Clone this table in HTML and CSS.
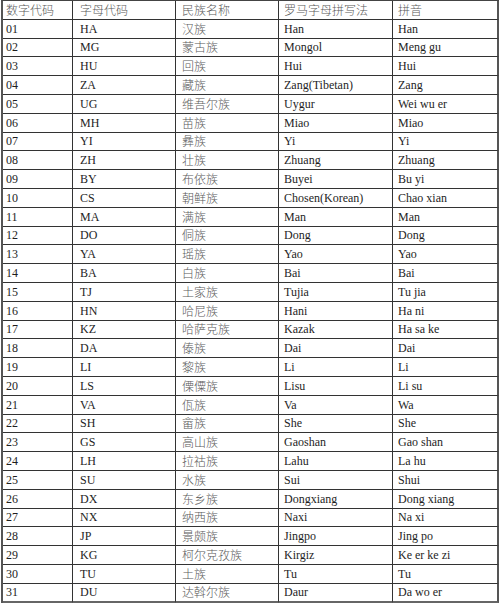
FILE: index.html
```html
<!DOCTYPE html>
<html lang="zh">
<head>
<meta charset="utf-8">
<link rel="stylesheet" href="styles.css">
</head>
<body>
<div class="tbl">
<div class="c h">数字代码</div><div class="c h">字母代码</div><div class="c h">民族名称</div><div class="c h">罗马字母拼写法</div><div class="c h">拼音</div>
<div class="c">01</div><div class="c">HA</div><div class="c zh">汉族</div><div class="c">Han</div><div class="c">Han</div>
<div class="c">02</div><div class="c">MG</div><div class="c zh">蒙古族</div><div class="c">Mongol</div><div class="c">Meng gu</div>
<div class="c">03</div><div class="c">HU</div><div class="c zh">回族</div><div class="c">Hui</div><div class="c">Hui</div>
<div class="c">04</div><div class="c">ZA</div><div class="c zh">藏族</div><div class="c">Zang(Tibetan)</div><div class="c">Zang</div>
<div class="c">05</div><div class="c">UG</div><div class="c zh">维吾尔族</div><div class="c">Uygur</div><div class="c">Wei wu er</div>
<div class="c">06</div><div class="c">MH</div><div class="c zh">苗族</div><div class="c">Miao</div><div class="c">Miao</div>
<div class="c">07</div><div class="c">YI</div><div class="c zh">彝族</div><div class="c">Yi</div><div class="c">Yi</div>
<div class="c">08</div><div class="c">ZH</div><div class="c zh">壮族</div><div class="c">Zhuang</div><div class="c">Zhuang</div>
<div class="c">09</div><div class="c">BY</div><div class="c zh">布依族</div><div class="c">Buyei</div><div class="c">Bu yi</div>
<div class="c">10</div><div class="c">CS</div><div class="c zh">朝鲜族</div><div class="c">Chosen(Korean)</div><div class="c">Chao xian</div>
<div class="c">11</div><div class="c">MA</div><div class="c zh">满族</div><div class="c">Man</div><div class="c">Man</div>
<div class="c">12</div><div class="c">DO</div><div class="c zh">侗族</div><div class="c">Dong</div><div class="c">Dong</div>
<div class="c">13</div><div class="c">YA</div><div class="c zh">瑶族</div><div class="c">Yao</div><div class="c">Yao</div>
<div class="c">14</div><div class="c">BA</div><div class="c zh">白族</div><div class="c">Bai</div><div class="c">Bai</div>
<div class="c">15</div><div class="c">TJ</div><div class="c zh">土家族</div><div class="c">Tujia</div><div class="c">Tu jia</div>
<div class="c">16</div><div class="c">HN</div><div class="c zh">哈尼族</div><div class="c">Hani</div><div class="c">Ha ni</div>
<div class="c">17</div><div class="c">KZ</div><div class="c zh">哈萨克族</div><div class="c">Kazak</div><div class="c">Ha sa ke</div>
<div class="c">18</div><div class="c">DA</div><div class="c zh">傣族</div><div class="c">Dai</div><div class="c">Dai</div>
<div class="c">19</div><div class="c">LI</div><div class="c zh">黎族</div><div class="c">Li</div><div class="c">Li</div>
<div class="c">20</div><div class="c">LS</div><div class="c zh">傈僳族</div><div class="c">Lisu</div><div class="c">Li su</div>
<div class="c">21</div><div class="c">VA</div><div class="c zh">佤族</div><div class="c">Va</div><div class="c">Wa</div>
<div class="c">22</div><div class="c">SH</div><div class="c zh">畲族</div><div class="c">She</div><div class="c">She</div>
<div class="c">23</div><div class="c">GS</div><div class="c zh">高山族</div><div class="c">Gaoshan</div><div class="c">Gao shan</div>
<div class="c">24</div><div class="c">LH</div><div class="c zh">拉祜族</div><div class="c">Lahu</div><div class="c">La hu</div>
<div class="c">25</div><div class="c">SU</div><div class="c zh">水族</div><div class="c">Sui</div><div class="c">Shui</div>
<div class="c">26</div><div class="c">DX</div><div class="c zh">东乡族</div><div class="c">Dongxiang</div><div class="c">Dong xiang</div>
<div class="c">27</div><div class="c">NX</div><div class="c zh">纳西族</div><div class="c">Naxi</div><div class="c">Na xi</div>
<div class="c">28</div><div class="c">JP</div><div class="c zh">景颇族</div><div class="c">Jingpo</div><div class="c">Jing po</div>
<div class="c">29</div><div class="c">KG</div><div class="c zh">柯尔克孜族</div><div class="c">Kirgiz</div><div class="c">Ke er ke zi</div>
<div class="c">30</div><div class="c">TU</div><div class="c zh">土族</div><div class="c">Tu</div><div class="c">Tu</div>
<div class="c">31</div><div class="c">DU</div><div class="c zh">达斡尔族</div><div class="c">Daur</div><div class="c">Da wo er</div>
</div>
</body>
</html>
```
FILE: styles.css
```css
html, body {
  margin: 0;
  padding: 0;
  background: #fff;
}
.tbl {
  margin-left: 1px;
  display: grid;
  grid-template-columns: 70px 103px 103px 114px 106px;
  grid-auto-rows: 18.8px;
  width: max-content;
  border-left: 2px solid #555;
  border-top: 1px solid #444;
  font-family: "Liberation Serif", "Noto Sans CJK SC", serif;
  font-size: 12px;
  color: #1e1e1e;
}
.c {
  box-sizing: border-box;
  border-right: 1px solid #333;
  border-bottom: 1px solid #333;
  display: flex;
  align-items: center;
  white-space: nowrap;
  padding-left: 5px;
  line-height: 1;
}
.c:nth-child(5n+1) { padding-left: 3px; }
.c:nth-child(5n+2) { padding-left: 7px; }
.c:nth-child(5n+3) { padding-left: 6px; }
.c:nth-child(5n) { border-right: 2px solid #555; }
.c:nth-last-child(-n+5) { border-bottom: 2px solid #666; }
.zh, .h {
  font-family: "Noto Sans CJK SC", sans-serif;
  font-weight: 300;
  color: #5a5a5a;
  font-size: 12px;
}
```
